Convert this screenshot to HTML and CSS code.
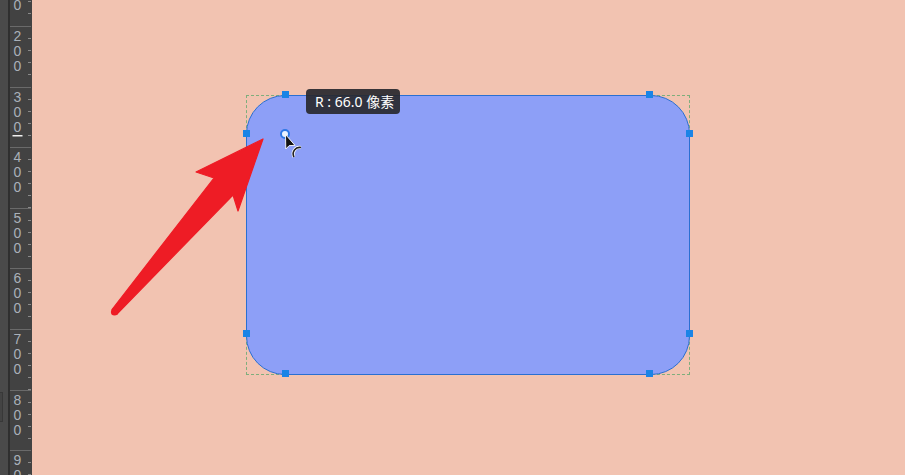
FILE: index.html
```html
<!DOCTYPE html>
<html>
<head>
<meta charset="utf-8">
<link rel="stylesheet" href="styles.css">
</head>
<body>
<div class="app">
  <div class="sidebar"><div class="side-tab"></div></div>
  <div class="ruler">
    <div class="marks">
      <div class="seg"><span>1</span><span>0</span><span>0</span></div>
      <div class="seg"><span>2</span><span>0</span><span>0</span></div>
      <div class="seg"><span>3</span><span>0</span><span class="cur">0</span></div>
      <div class="seg"><span>4</span><span>0</span><span>0</span></div>
      <div class="seg"><span>5</span><span>0</span><span>0</span></div>
      <div class="seg"><span>6</span><span>0</span><span>0</span></div>
      <div class="seg"><span>7</span><span>0</span><span>0</span></div>
      <div class="seg"><span>8</span><span>0</span><span>0</span></div>
      <div class="seg"><span>9</span><span>0</span><span>0</span></div>
    </div>
  </div>
  <div class="canvas">
    <div class="bbox"></div>
    <div class="shape"></div>
    <div class="handle h1"></div>
    <div class="handle h2"></div>
    <div class="handle h3"></div>
    <div class="handle h4"></div>
    <div class="handle h5"></div>
    <div class="handle h6"></div>
    <div class="handle h7"></div>
    <div class="handle h8"></div>
    <div class="tooltip">R : 66.0 像素</div>
    <svg class="cursor" width="26" height="32" viewBox="0 0 26 32">
      <circle cx="5" cy="6" r="4" fill="#eaf2ff" stroke="#2f78e6" stroke-width="2"/>
      <path d="M5.5 6.5 L5.8 21 L9.2 17.6 L15 17.4 Z" fill="#111" stroke="#fff" stroke-width="0.9" stroke-linejoin="round"/>
      <path d="M14 29 A6.5 6.5 0 0 1 21 19.5" fill="none" stroke="#fff" stroke-width="3"/>
      <path d="M14 29 A6.5 6.5 0 0 1 21 19.5" fill="none" stroke="#222" stroke-width="1.6"/>
    </svg>
  </div>
  <svg class="annot" width="905" height="475" viewBox="0 0 905 475">
    <polygon points="263,139 238,211 233,195 117,314 112,309.5 214,178 196,172" fill="#ee1c25" stroke="#ee1c25" stroke-width="1.2" stroke-linejoin="round"/>
    <circle cx="114.5" cy="312" r="3.6" fill="#ee1c25"/>
  </svg>
</div>
</body>
</html>
```

FILE: styles.css
```css
html, body {
  margin: 0;
  padding: 0;
}
body {
  width: 905px;
  height: 475px;
  overflow: hidden;
  font-family: "Liberation Sans", Arial, sans-serif;
}
.app {
  position: relative;
  display: flex;
  width: 905px;
  height: 475px;
  overflow: hidden;
}
.sidebar {
  width: 8px;
  background: #4a4a4a;
  border-right: 2px solid #2f2f2f;
  position: relative;
  flex: none;
}
.side-tab {
  position: absolute;
  left: 0;
  top: 392px;
  width: 2px;
  height: 28px;
  border: 1px solid #383838;
  border-left: none;
  background: #434343;
}
.ruler {
  width: 22px;
  flex: none;
  background: #424242;
  overflow: hidden;
  position: relative;
}
.marks {
  margin-top: -34.6px;
  display: flex;
  flex-direction: column;
}
.seg {
  height: 60.6px;
  flex: none;
  box-sizing: border-box;
  border-top: 1px solid #6a6a6a;
  margin-right: 1px;
  padding-top: 2px;
  padding-left: 2px;
  display: flex;
  flex-direction: column;
  background: repeating-linear-gradient(to bottom, transparent 0, transparent 11.1px, #8a8a8a 11.1px, #8a8a8a 12.1px) no-repeat right 0 top 0 / 3px 60px;
}
.seg span {
  display: block;
  width: 11px;
  text-align: center;
  font-size: 14px;
  line-height: 15px;
  height: 15px;
  color: #aab1b9;
}
.seg span.cur {
  box-shadow: 0 2px 0 -0.5px #f0f0f0;
}
.canvas {
  flex: 1;
  position: relative;
  background: #f2c3b1;
}
.bbox {
  position: absolute;
  left: 214px;
  top: 95px;
  width: 444px;
  height: 280px;
  box-sizing: border-box;
  border: 1px dashed #7fae7c;
}
.shape {
  position: absolute;
  left: 214px;
  top: 95px;
  width: 444px;
  height: 280px;
  box-sizing: border-box;
  border: 1px solid #2a6fd2;
  border-radius: 39px;
  background: #8d9ff7;
}
.handle {
  position: absolute;
  width: 7px;
  height: 7px;
  background: #1a84e6;
}
.h1 { left: 250px; top: 91px; }
.h2 { left: 614px; top: 91px; }
.h3 { left: 211px; top: 130px; }
.h4 { left: 654px; top: 130px; }
.h5 { left: 211px; top: 330px; }
.h6 { left: 654px; top: 330px; }
.h7 { left: 250px; top: 370px; }
.h8 { left: 614px; top: 370px; }
.tooltip {
  position: absolute;
  left: 274px;
  top: 89px;
  height: 25px;
  width: 94px;
  box-sizing: border-box;
  padding-left: 9px;
  background: rgba(40, 40, 46, 0.92);
  border-radius: 4px;
  color: #ffffff;
  font-family: "Noto Sans", "Noto Sans CJK SC", sans-serif;
  font-size: 14px;
  line-height: 25px;
  white-space: nowrap;
  overflow: hidden;
}
.cursor {
  position: absolute;
  left: 248px;
  top: 128px;
}
.annot {
  position: absolute;
  left: 0;
  top: 0;
  pointer-events: none;
}
```
